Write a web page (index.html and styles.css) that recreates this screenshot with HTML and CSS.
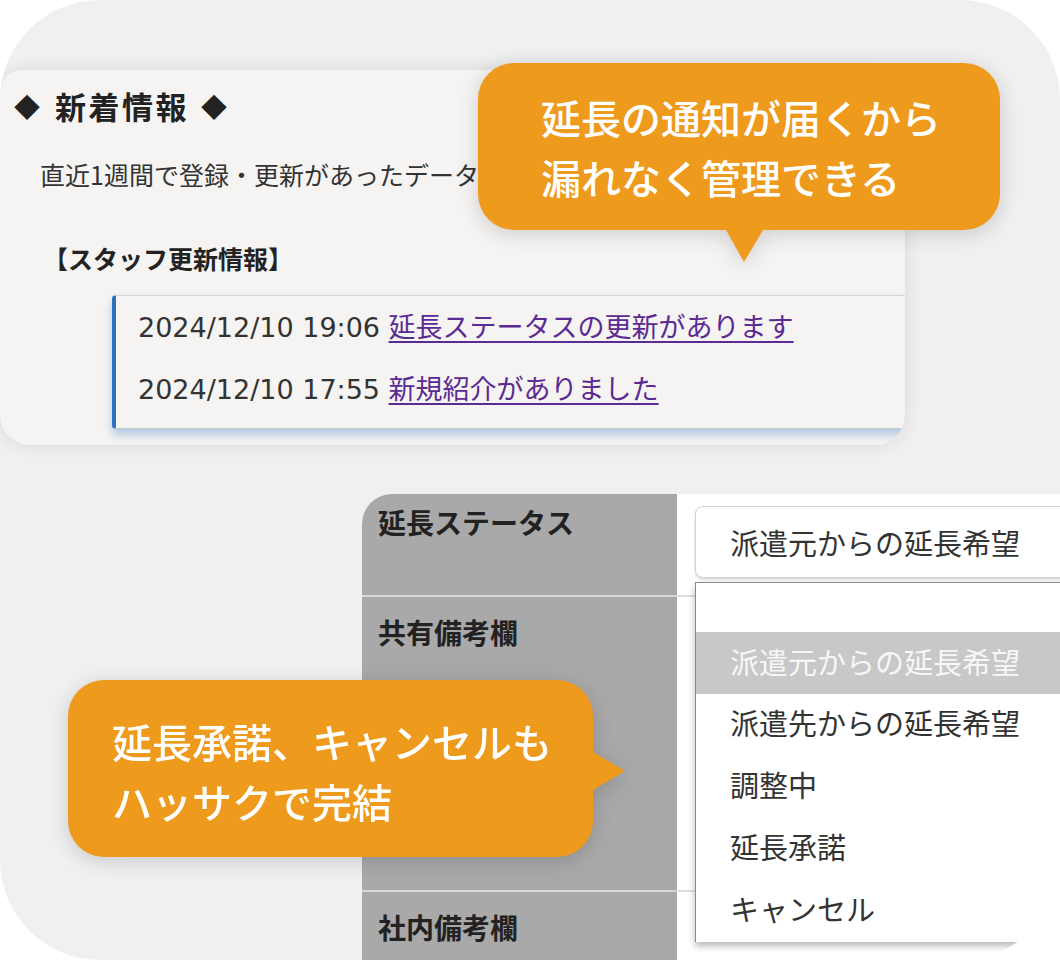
FILE: index.html
```html
<!DOCTYPE html>
<html lang="ja">
<head>
<meta charset="utf-8">
<title>延長管理</title>
<link rel="stylesheet" href="styles.css">
</head>
<body>
<div class="frame">
  <section class="card">
    <h2 class="card-title"><span class="dia">◆</span><span class="title-text">新着情報</span><span class="dia">◆</span></h2>
    <p class="card-desc">直近1週間で登録・更新があったデータ</p>
    <h3 class="card-sub">【スタッフ更新情報】</h3>
    <ul class="updates">
      <li><span class="time">2024/12/10 19:06 </span><a href="#" class="link">延長ステータスの更新があります</a></li>
      <li><span class="time">2024/12/10 17:55 </span><a href="#" class="link">新規紹介がありました</a></li>
    </ul>
  </section>

  <div class="form">
    <div class="label label-first">延長ステータス</div>
    <div class="field field-first">
      <div class="select">
        <span class="select-value">派遣元からの延長希望</span>
        <ul class="options">
          <li class="option option-empty"></li>
          <li class="option option-active">派遣元からの延長希望</li>
          <li class="option">派遣先からの延長希望</li>
          <li class="option">調整中</li>
          <li class="option">延長承諾</li>
          <li class="option">キャンセル</li>
        </ul>
      </div>
    </div>
    <div class="label">共有備考欄</div>
    <div class="field"></div>
    <div class="label">社内備考欄</div>
    <div class="field"></div>
  </div>

  <div class="bubble bubble-top">延長の通知が届くから<br>漏れなく管理できる</div>
  <div class="bubble bubble-left">延長承諾、キャンセルも<br>ハッサクで完結</div>
</div>
</body>
</html>
```

FILE: styles.css
```css
html, body {
  margin: 0;
  padding: 0;
  background: #ffffff;
}

body {
  font-family: "Noto Sans CJK JP", "Noto Sans", sans-serif;
  color: #333;
}

.frame {
  position: relative;
  width: 1060px;
  height: 960px;
  border-radius: 100px;
  background: #f0f0f0;
  overflow: hidden;
  display: flex;
  flex-direction: column;
}

/* ---------- top card ---------- */
.card {
  margin-top: 70px;
  width: 905px;
  height: 375px;
  flex: none;
  box-sizing: border-box;
  padding: 16px 0 0 14px;
  background: #f5f4f2;
  border-radius: 22px 30px 30px 30px;
  box-shadow: 0 0 18px rgba(0, 0, 0, 0.10);
  overflow: hidden;
}

.card-title {
  margin: 0;
  height: 40px;
  display: flex;
  align-items: center;
  color: #222;
  font-weight: 700;
}

.dia {
  font-size: 26px;
  line-height: 40px;
  color: #222;
}

.title-text {
  margin: 0 12px 0 15px;
  font-size: 31px;
  letter-spacing: 2.5px;
  line-height: 40px;
}

.card-desc {
  margin: 30px 0 0 26px;
  width: 440px;
  overflow: hidden;
  font-size: 25px;
  line-height: 36px;
  color: #333;
  white-space: nowrap;
}

.card-sub {
  margin: 48px 0 0 29px;
  font-size: 25px;
  line-height: 36px;
  font-weight: 700;
  color: #222;
}

.updates {
  list-style: none;
  margin: 19px 0 0 98px;
  padding: 0 0 8px 22px;
  background: #f5f4f2;
  border-left: 4px solid #2f72c0;
  border-top: 1px solid #d6d6d6;
  border-bottom: 1px solid #c9c9c9;
  border-radius: 4px 0 0 4px;
  box-shadow: 0 6px 8px rgba(70, 130, 200, 0.38);
}

.updates li {
  font-size: 27px;
  line-height: 60px;
  white-space: nowrap;
  color: #333;
}

.time {
  font-family: "DejaVu Sans", "Noto Sans", sans-serif;
  color: #333;
}

.link {
  color: #5b2a92;
  text-decoration: underline;
  text-decoration-thickness: 2px;
  text-underline-offset: 4px;
}

/* ---------- form ---------- */
.form {
  margin: 49px 0 0 362px;
  width: 760px;
  flex: none;
  display: grid;
  grid-template-columns: 315px 1fr;
  grid-template-rows: 103px 295px 100px;
  border-radius: 30px 0 0 0;
  overflow: hidden;
  background: #ffffff;
}

.label {
  box-sizing: border-box;
  background: #a9a9a9;
  border-bottom: 2px solid #d6d6d6;
  padding: 15px 16px 0;
  font-size: 28px;
  line-height: 40px;
  font-weight: 700;
  color: #222;
}

.label-first {
  padding-top: 8px;
}

.field {
  box-sizing: border-box;
  background: #ffffff;
  border-bottom: 2px solid #dedede;
}

.field-first {
  padding: 12px 0 0 18px;
}

.select {
  position: relative;
  box-sizing: border-box;
  width: 440px;
  height: 72px;
  border: 1px solid #d2d2d2;
  border-radius: 8px;
  background: #ffffff;
  box-shadow: 0 2px 3px rgba(0, 0, 0, 0.14);
  display: flex;
  align-items: center;
  padding-left: 34px;
}

.select-value {
  font-size: 29px;
  color: #333;
  white-space: nowrap;
}

.options {
  position: absolute;
  left: -1px;
  top: 75px;
  width: 420px;
  list-style: none;
  margin: 0;
  padding: 0;
  background: #ffffff;
  border-left: 1px solid #8a8a8a;
  border-top: 1px solid #8a8a8a;
  box-shadow: 0 4px 7px rgba(0, 0, 0, 0.28);
  z-index: 2;
}

.option {
  height: 62px;
  box-sizing: border-box;
  padding: 0 0 6px 34px;
  font-size: 29px;
  line-height: 56px;
  color: #333;
  white-space: nowrap;
}

.option-empty {
  height: 49px;
}

.option-active {
  background: #c8c8c8;
  color: #f7f7f7;
  padding-bottom: 4px;
  line-height: 58px;
}

/* ---------- callouts ---------- */
.bubble {
  position: absolute;
  box-sizing: border-box;
  background: #ee9a1d;
  color: #ffffff;
  font-size: 40px;
  font-weight: 500;
  line-height: 60px;
  white-space: nowrap;
  filter: drop-shadow(0 4px 10px rgba(0, 0, 0, 0.16));
  z-index: 5;
}

.bubble::after {
  content: "";
  position: absolute;
  width: 0;
  height: 0;
}

.bubble-top {
  left: 478px;
  top: 63px;
  width: 522px;
  height: 167px;
  border-radius: 36px;
  padding: 24px 0 0 63px;
}

.bubble-top::after {
  left: 248px;
  top: 100%;
  border-left: 18px solid transparent;
  border-right: 19px solid transparent;
  border-top: 32px solid #ee9a1d;
}

.bubble-left {
  left: 68px;
  top: 680px;
  width: 525px;
  height: 177px;
  border-radius: 36px;
  padding: 31px 0 0 44px;
}

.bubble-left::after {
  left: 100%;
  top: 72px;
  border-top: 19px solid transparent;
  border-bottom: 19px solid transparent;
  border-left: 32px solid #ee9a1d;
}
```
